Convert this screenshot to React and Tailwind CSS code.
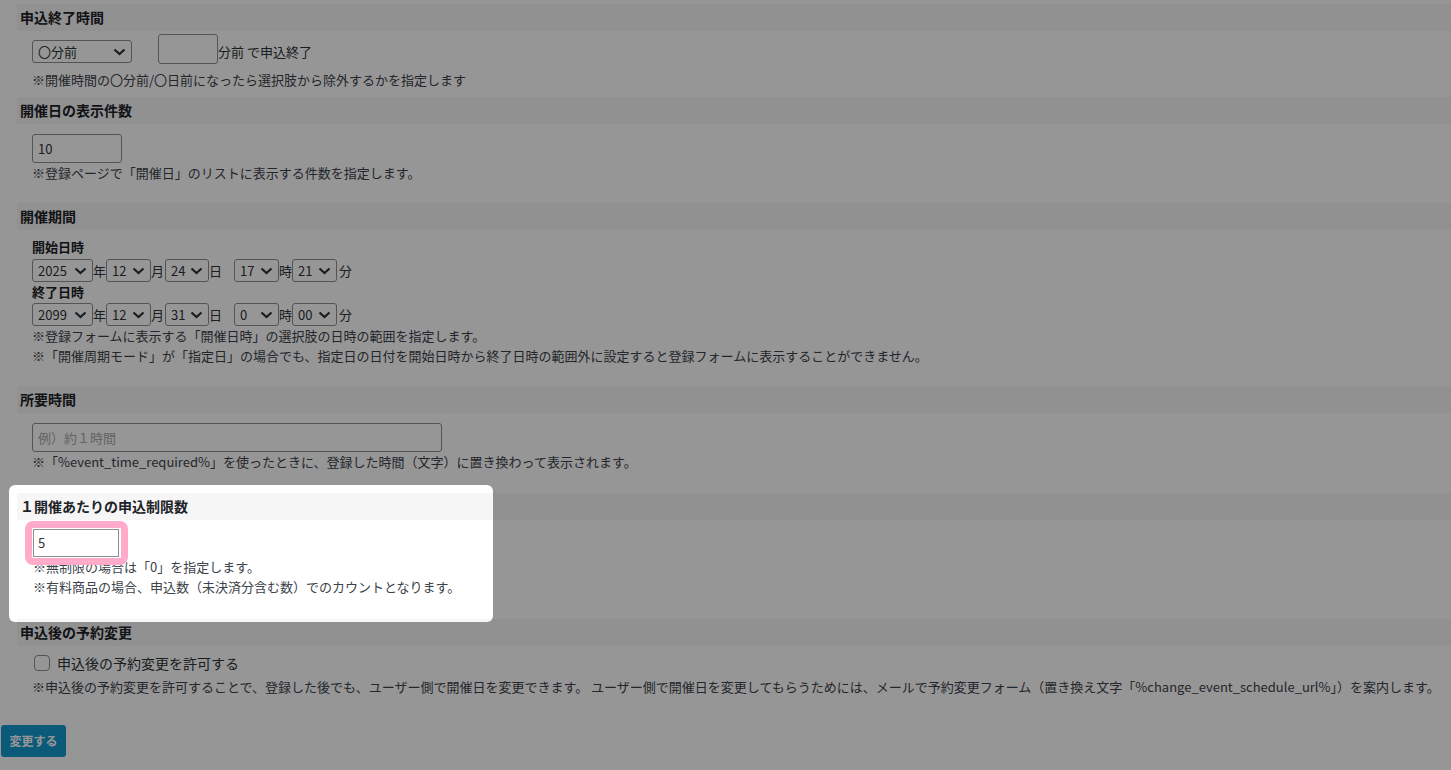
const Chevron = () => (
    <svg width="13" height="8" viewBox="0 0 13 8" className="shrink-0">
        <path d="M1.5 1.5 L6.5 6 L11.5 1.5" fill="none" stroke="#2c3338" strokeWidth="2.2" />
    </svg>
)

const Select = ({ value, w }) => (
    <div className={`${w} h-[23px] border border-[#8c8f94] rounded-[3px] bg-white flex items-center justify-between pl-[5px] pr-[5px] text-[13px] text-[#2c3338] leading-none`}>
        <span>{value}</span>
        <Chevron />
    </div>
)

const Header = ({ children }) => (
    <div className="ml-[17px] h-[27px] bg-[#f6f6f6] pl-[3px] flex items-center text-[14px] font-bold text-[#1d2327]">
        {children}
    </div>
)

const Note = ({ children }) => <p className="leading-[20px] whitespace-nowrap">{children}</p>

const DateRow = ({ y, m, d, h, mi }) => (
    <div className="flex items-center h-[23px] text-[13px] text-[#2c3338]">
        <Select value={y} w="w-[61px]" />
        <span className="w-[13px]">年</span>
        <Select value={m} w="w-[45px]" />
        <span className="w-[14px]">月</span>
        <Select value={d} w="w-[44px]" />
        <span className="w-[25px]">日</span>
        <Select value={h} w="w-[45px]" />
        <span className="w-[13px]">時</span>
        <Select value={mi} w="w-[45px]" />
        <span className="ml-[2px]">分</span>
    </div>
)

export default function App() {
    return (
        <div className="relative h-[770px] w-full overflow-hidden bg-white pt-[4px] text-[13px] text-[#3c434a] font-['Noto_Sans_CJK_JP','Noto_Sans',sans-serif]">
            {/* 申込終了時間 */}
            <Header>申込終了時間</Header>
            <div className="pl-[32px] mt-[3px] flex items-end">
                <div className="mb-[1px]">
                    <Select value="〇分前" w="w-[100px]" />
                </div>
                <div className="ml-[26px] w-[60px] h-[30px] border border-[#8c8f94] rounded-[3px] bg-white" />
                <span className="leading-[20px] mb-[2px] text-[13px] text-[#2c3338]">分前 で申込終了</span>
            </div>
            <div className="pl-[32px] mt-[6px] mb-[7px]">
                <Note>※開催時間の〇分前/〇日前になったら選択肢から除外するかを指定します</Note>
            </div>

            {/* 開催日の表示件数 */}
            <Header>開催日の表示件数</Header>
            <div className="pl-[32px] mt-[10px] mb-[20px]">
                <div className="w-[90px] h-[29px] border border-[#8c8f94] rounded-[3px] bg-white flex items-center pl-[5px] text-[13px] text-[#2c3338]">10</div>
                <Note>※登録ページで「開催日」のリストに表示する件数を指定します。</Note>
            </div>

            {/* 開催期間 */}
            <Header>開催期間</Header>
            <div className="pl-[32px] mt-[8px] mb-[20px]">
                <p className="leading-[18px] font-bold text-[#1d2327]">開始日時</p>
                <div className="mt-[3px]">
                    <DateRow y="2025" m="12" d="24" h="17" mi="21" />
                </div>
                <p className="mt-[1px] leading-[18px] font-bold text-[#1d2327]">終了日時</p>
                <div className="mt-[2px]">
                    <DateRow y="2099" m="12" d="31" h="0" mi="00" />
                </div>
                <Note>※登録フォームに表示する「開催日時」の選択肢の日時の範囲を指定します。</Note>
                <Note>※「開催周期モード」が「指定日」の場合でも、指定日の日付を開始日時から終了日時の範囲外に設定すると登録フォームに表示することができません。</Note>
            </div>

            {/* 所要時間 */}
            <Header>所要時間</Header>
            <div className="pl-[32px] mt-[10px] mb-[21px]">
                <div className="w-[410px] h-[29px] border border-[#8c8f94] rounded-[3px] bg-white flex items-center pl-[5px] text-[13px] text-[#a7aaad]">例）約１時間</div>
                <Note>※「%event_time_required%」を使ったときに、登録した時間（文字）に置き換わって表示されます。</Note>
            </div>

            {/* 1開催あたりの申込制限数 */}
            <Header>１開催あたりの申込制限数</Header>
            <div className="pl-[33px] mt-[9px] mb-[22px]">
                <div className="relative w-[86px] h-[28px]">
                    <div className="absolute -left-[8px] -top-[8px] -right-[9px] -bottom-[8px] rounded-[8px] border-[7px] border-[#ffabc9]" />
                    <div className="relative w-full h-full border border-[#8c8f94] bg-white flex items-center pl-[4px] text-[13px] text-[#2c3338]">5</div>
                </div>
                <div>
                    <Note>※無制限の場合は「0」を指定します。</Note>
                    <Note>※有料商品の場合、申込数（未決済分含む数）でのカウントとなります。</Note>
                </div>
            </div>

            {/* 申込後の予約変更 */}
            <Header>申込後の予約変更</Header>
            <div className="pl-[34px] mt-[8px]">
                <label className="flex items-center h-[18px] text-[14px] text-[#2c3338]">
                    <span className="w-[16px] h-[16px] border border-[#8c8f94] rounded-[4px] bg-white" />
                    <span className="ml-[7px]">申込後の予約変更を許可する</span>
                </label>
            </div>
            <div className="pl-[32px] mt-[5px]">
                <Note>※申込後の予約変更を許可することで、登録した後でも、ユーザー側で開催日を変更できます。 ユーザー側で開催日を変更してもらうためには、メールで予約変更フォーム（置き換え文字「%change_event_schedule_url%」）を案内します。</Note>
            </div>
            <div className="pl-[1px] mt-[28px]">
                <button className="w-[65px] h-[32px] rounded-[3px] bg-[#149ad0] text-white text-[12px] font-bold">変更する</button>
            </div>

            {/* spotlight overlay */}
            <div className="pointer-events-none absolute left-[9px] top-[485px] w-[484px] h-[137px] rounded-[6px] shadow-[0_0_0_9999px_rgba(0,0,0,0.41)]" />
        </div>
    )
}
